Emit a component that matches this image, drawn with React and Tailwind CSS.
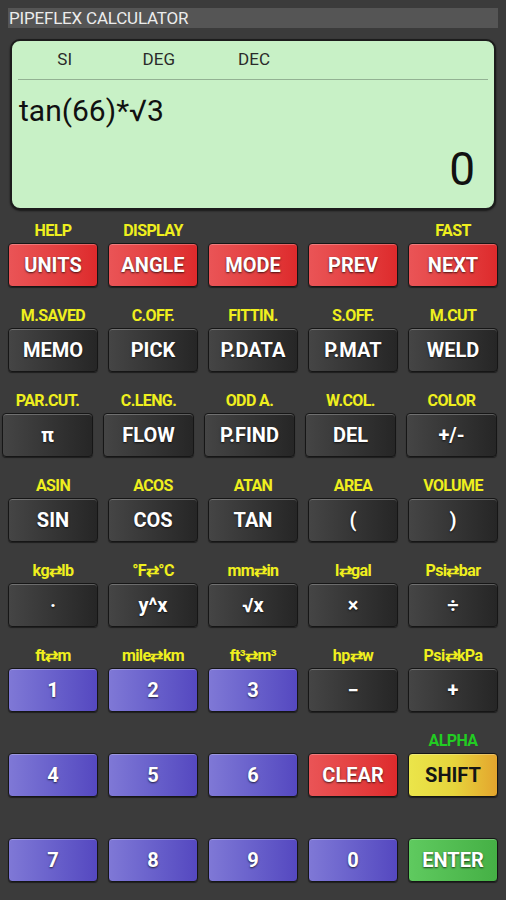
import React from "react";

const styles = {
  red: "bg-gradient-to-r from-[#ea5456] to-[#de2a2c] text-white",
  dark: "bg-gradient-to-r from-[#454545] to-[#262626] text-white",
  blue: "bg-gradient-to-r from-[#7f78d6] to-[#5548c0] text-white",
  yellow: "bg-gradient-to-r from-[#ebe54a] via-[#e6d53c] to-[#e3a52e] text-[#151515]",
  green: "bg-gradient-to-r from-[#5fca5f] to-[#45b045] text-white",
};

const rows = [
  {
    pad: "px-2",
    keys: [
      ["HELP", "UNITS", "red"],
      ["DISPLAY", "ANGLE", "red"],
      ["", "MODE", "red"],
      ["", "PREV", "red"],
      ["FAST", "NEXT", "red"],
    ],
  },
  {
    pad: "px-2",
    keys: [
      ["M.SAVED", "MEMO", "dark"],
      ["C.OFF.", "PICK", "dark"],
      ["FITTIN.", "P.DATA", "dark"],
      ["S.OFF.", "P.MAT", "dark"],
      ["M.CUT", "WELD", "dark"],
    ],
  },
  {
    pad: "pl-[2px] pr-[9px]",
    keys: [
      ["PAR.CUT.", "π", "dark"],
      ["C.LENG.", "FLOW", "dark"],
      ["ODD A.", "P.FIND", "dark"],
      ["W.COL.", "DEL", "dark"],
      ["COLOR", "+/-", "dark"],
    ],
  },
  {
    pad: "px-2",
    keys: [
      ["ASIN", "SIN", "dark"],
      ["ACOS", "COS", "dark"],
      ["ATAN", "TAN", "dark"],
      ["AREA", "(", "dark"],
      ["VOLUME", ")", "dark"],
    ],
  },
  {
    pad: "px-2",
    keys: [
      ["kg⇄lb", "·", "dark"],
      ["°F⇄°C", "y^x", "dark"],
      ["mm⇄in", "√x", "dark"],
      ["l⇄gal", "×", "dark"],
      ["Psi⇄bar", "÷", "dark"],
    ],
  },
  {
    pad: "px-2",
    keys: [
      ["ft⇄m", "1", "blue"],
      ["mile⇄km", "2", "blue"],
      ["ft³⇄m³", "3", "blue"],
      ["hp⇄w", "−", "dark"],
      ["Psi⇄kPa", "+", "dark"],
    ],
  },
  {
    pad: "px-2",
    keys: [
      ["", "4", "blue"],
      ["", "5", "blue"],
      ["", "6", "blue"],
      ["", "CLEAR", "red"],
      ["ALPHA", "SHIFT", "yellow"],
    ],
  },
  {
    pad: "px-2",
    keys: [
      ["", "7", "blue"],
      ["", "8", "blue"],
      ["", "9", "blue"],
      ["", "0", "blue"],
      ["", "ENTER", "green"],
    ],
  },
];

const Key = ({ top, label, kind }) => (
  <div className="flex flex-col items-stretch">
    <div
      className={`h-[18px] text-center text-[16px] font-bold leading-[18px] tracking-[-0.6px] whitespace-nowrap ${
        top === "ALPHA" ? "text-[#22cc22]" : "text-[#efef1e]"
      }`}
    >
      {top}
    </div>
    <div
      className={`mt-[3px] flex h-[44px] items-center justify-center rounded-[4px] border border-[#161616] text-[20px] font-bold shadow-[inset_0_1px_0_rgba(255,255,255,0.25),0_1px_1px_rgba(0,0,0,0.5)] ${styles[kind]} ${
        kind === "yellow" ? "" : "[text-shadow:0_1px_2px_rgba(0,0,0,0.7)]"
      }`}
    >
      {label}
    </div>
  </div>
);

export default function App() {
  return (
    <div className="min-h-[900px] w-[506px] bg-[#3b3b3b] pt-2 font-['Roboto','Liberation_Sans',sans-serif]">
      <div className="mx-2 flex h-[20px] items-center bg-[#555555] pl-[1px] text-[17px] leading-none text-[#ececec] tracking-[-0.2px]">
        PIPEFLEX CALCULATOR
      </div>

      <div className="mx-[10px] mt-[11px] h-[171px] rounded-[10px] border-2 border-[#1c1c1c] bg-[#c8f1c6] px-[6px] shadow-[0_1px_2px_rgba(0,0,0,0.6)]">
        <div className="flex h-[38px] items-center text-[17px] text-[#2a2a2a]">
          <span className="w-[54px] text-right">SI</span>
          <span className="w-[103px] text-right">DEG</span>
          <span className="w-[95px] text-right">DEC</span>
        </div>
        <div className="h-px bg-[#93b293]" />
        <div className="pt-[14px] pl-[1px] text-[30px] leading-[34px] text-[#111]">
          tan(66)*√3
        </div>
        <div className="mt-[16px] pr-[13px] text-right text-[46px] leading-[50px] text-[#111]">
          0
        </div>
      </div>

      <div className="mt-[12px] flex flex-col gap-[20px]">
        {rows.map((row, i) => (
          <div key={i} className={`grid grid-cols-5 gap-[10px] ${row.pad}`}>
            {row.keys.map(([top, label, kind]) => (
              <Key key={label} top={top} label={label} kind={kind} />
            ))}
          </div>
        ))}
      </div>
    </div>
  );
}
